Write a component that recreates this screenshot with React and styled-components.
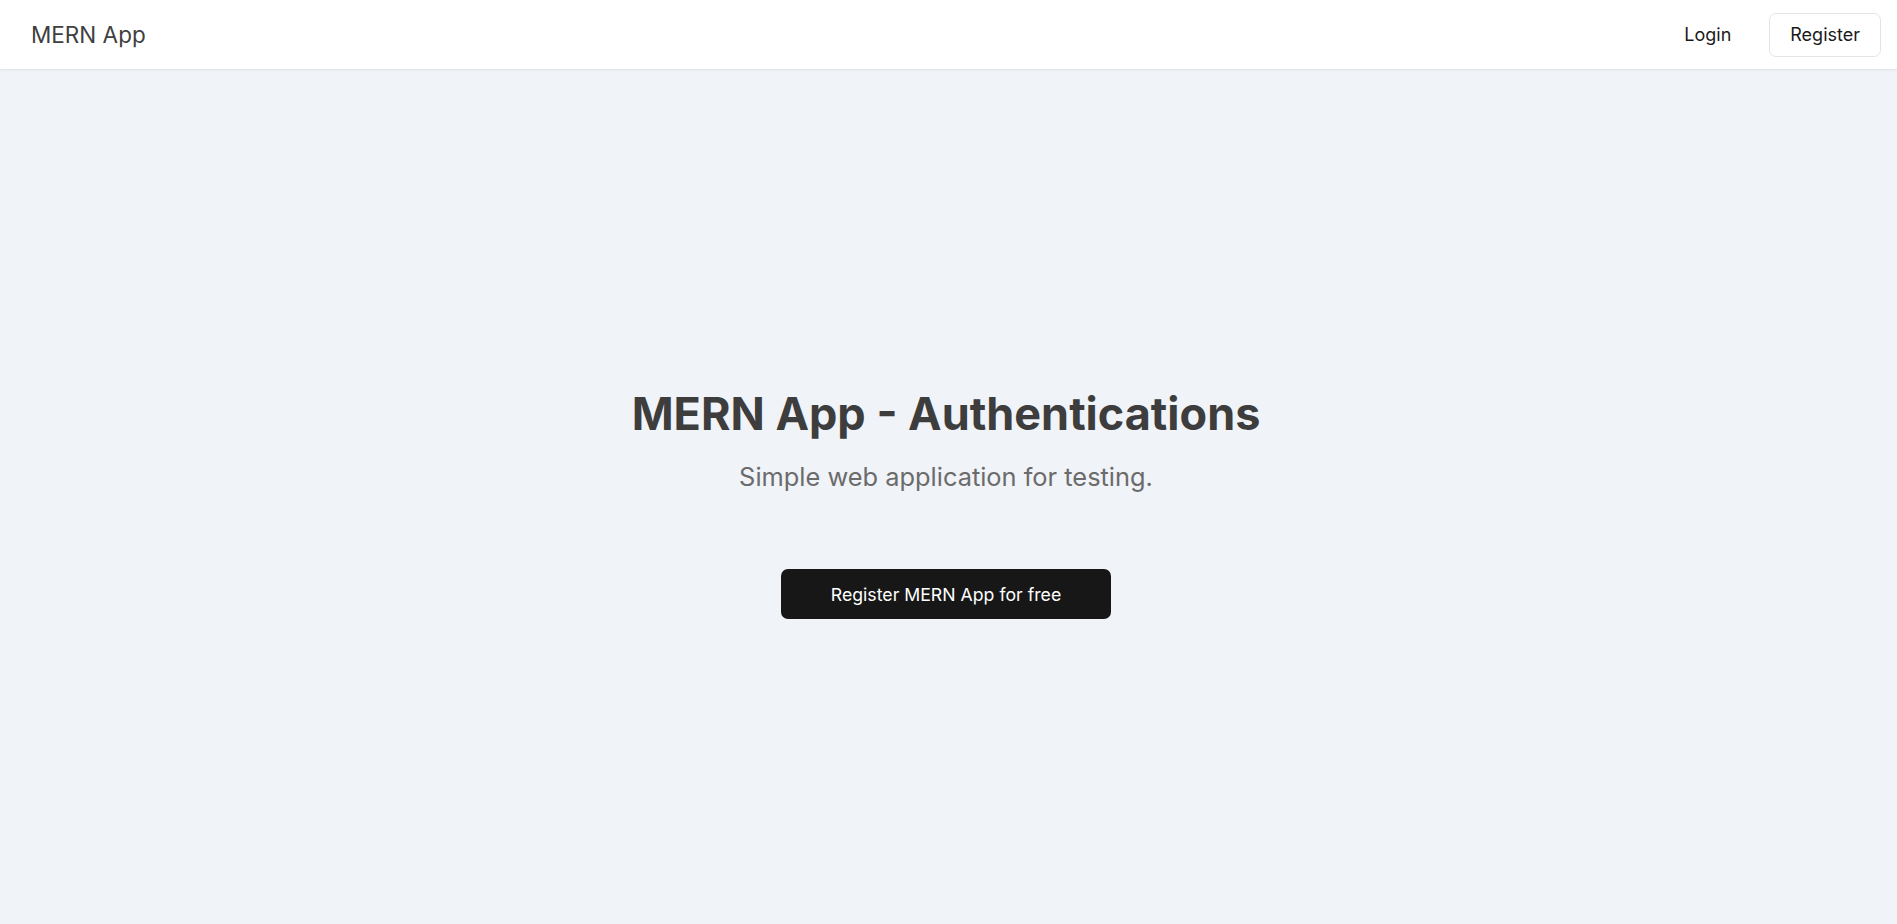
import React from 'react';
import styled, { createGlobalStyle } from 'styled-components';

const GlobalStyle = createGlobalStyle`
  * {
    margin: 0;
    padding: 0;
    box-sizing: border-box;
  }

  body {
    font-family: 'Inter', 'Liberation Sans', sans-serif;
    background: #f0f3f8;
    color: #3f3f3f;
  }

  #root {
    min-height: 100vh;
    display: flex;
    flex-direction: column;
  }
`;

const Navbar = styled.header`
  height: 70px;
  background: #ffffff;
  display: flex;
  align-items: center;
  justify-content: space-between;
  padding: 0 16px 0 31px;
  border-bottom: 1px solid #e3e6eb;
  box-shadow: 0 1px 3px rgba(0, 0, 0, 0.04);
`;

const Brand = styled.a`
  font-size: 22.5px;
  color: #3f3f3f;
  text-decoration: none;
`;

const NavLinks = styled.nav`
  display: flex;
  align-items: center;
  gap: 17px;
`;

const NavButton = styled.button`
  font-family: inherit;
  font-size: 18px;
  color: #1a1a1a;
  background: ${props => (props.outlined ? '#ffffff' : 'transparent')};
  border: 1px solid ${props => (props.outlined ? '#e4e4e7' : 'transparent')};
  border-radius: 7px;
  height: 44px;
  padding: 0 20px;
  cursor: pointer;
`;

const Hero = styled.main`
  flex: 1;
  display: flex;
  flex-direction: column;
  align-items: center;
  justify-content: center;
  padding: 12px 5px 0 0;
`;

const Title = styled.h1`
  font-size: 45px;
  font-weight: 700;
  color: #3d3d3d;
  line-height: 1.2;
`;

const Subtitle = styled.p`
  font-size: 25.4px;
  color: #6b6b6b;
  margin-top: 20px;
`;

const CtaButton = styled.button`
  margin-top: 77px;
  width: 330px;
  height: 50px;
  background: #171717;
  color: #ffffff;
  border: none;
  border-radius: 7px;
  font-family: inherit;
  font-size: 17.7px;
  cursor: pointer;
`;

const App = () => {
  return (
    <>
      <GlobalStyle />
      <Navbar>
        <Brand href="#">MERN App</Brand>
        <NavLinks>
          <NavButton>Login</NavButton>
          <NavButton outlined>Register</NavButton>
        </NavLinks>
      </Navbar>
      <Hero>
        <Title>MERN App - Authentications</Title>
        <Subtitle>Simple web application for testing.</Subtitle>
        <CtaButton>Register MERN App for free</CtaButton>
      </Hero>
    </>
  );
};

export default App;
